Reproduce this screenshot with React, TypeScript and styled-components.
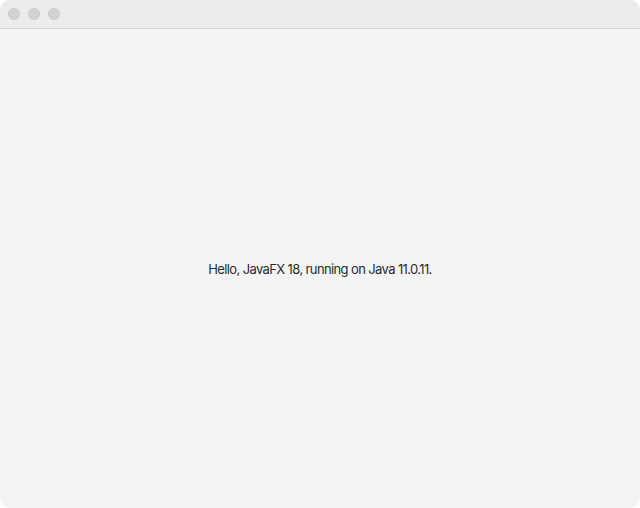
import React from "react";
import styled, { createGlobalStyle } from "styled-components";

const Global = createGlobalStyle`
  html, body { margin: 0; padding: 0; background: #ffffff; }
  #root { width: 640px; height: 508px; }
`;

const Window = styled.div`
  width: 640px;
  height: 508px;
  box-sizing: border-box;
  border-radius: 10px;
  overflow: hidden;
  background: #f4f4f4;
  display: flex;
  flex-direction: column;
`;

const TitleBar = styled.div`
  height: 29px;
  flex: 0 0 29px;
  box-sizing: border-box;
  background: #ececec;
  border-bottom: 1px solid #d6d6d6;
  display: flex;
  align-items: center;
  padding-left: 8px;
  padding-bottom: 1px;
  gap: 8px;
`;

const Light = styled.span`
  width: 12px;
  height: 12px;
  border-radius: 50%;
  box-sizing: border-box;
  background: #d3d3d3;
  border: 0.5px solid #c8c8c8;
`;

const Content = styled.div`
  flex: 1;
  display: flex;
  align-items: center;
  justify-content: center;
`;

const Message = styled.span`
  font-family: Inter, "Liberation Sans", sans-serif;
  font-size: 13px;
  color: #2a2a2a;
  letter-spacing: -0.62px;
`;

export default function App() {
  return (
    <>
      <Global />
      <Window>
        <TitleBar>
          <Light />
          <Light />
          <Light />
        </TitleBar>
        <Content>
          <Message>Hello, JavaFX 18, running on Java 11.0.11.</Message>
        </Content>
      </Window>
    </>
  );
}
